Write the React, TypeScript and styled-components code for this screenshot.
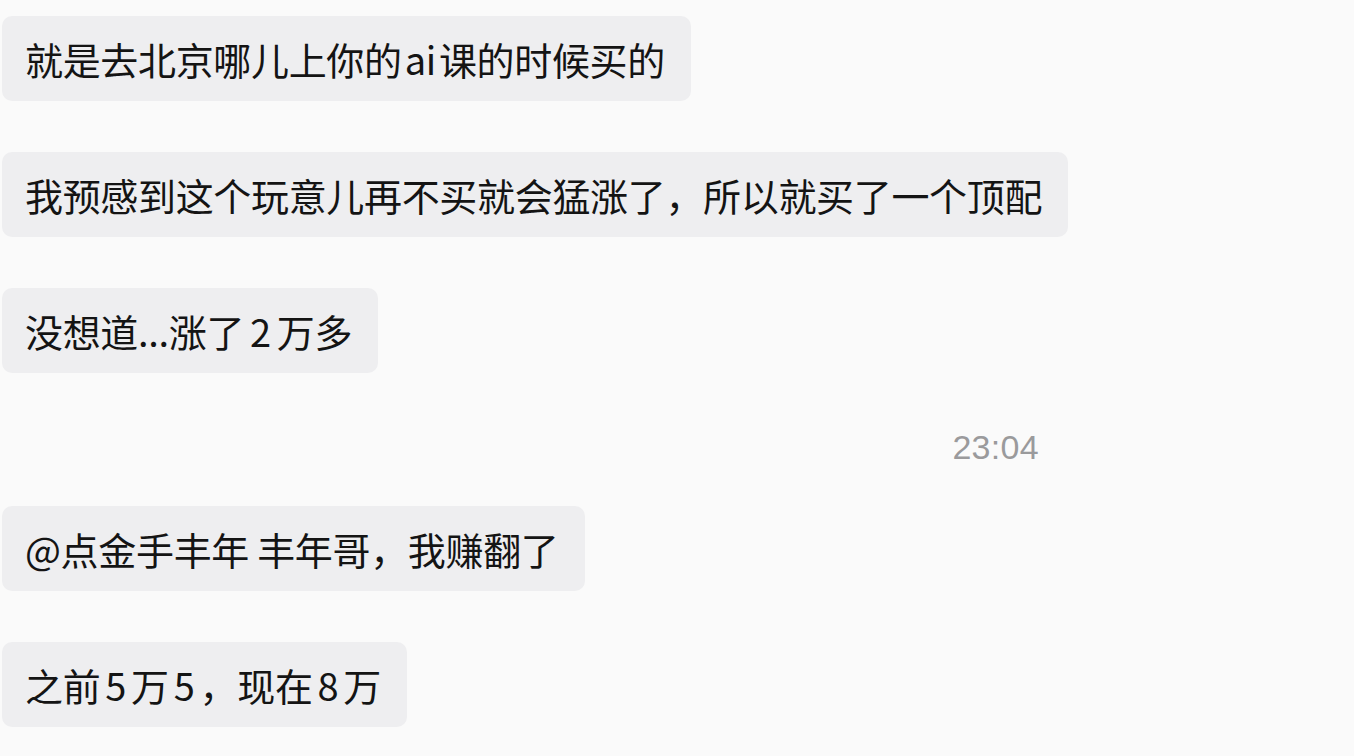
import React from "react";
import styled, { createGlobalStyle } from "styled-components";

const GlobalStyle = createGlobalStyle`
  html, body {
    margin: 0;
    padding: 0;
    background: #fafafa;
  }
  body {
    font-family: "Noto Sans CJK SC", "Noto Sans", sans-serif;
    -webkit-font-smoothing: antialiased;
  }
`;

const Page = styled.div`
  width: 1354px;
  height: 756px;
  background: #fafafa;
  overflow: hidden;
  padding: 16px 0 0 2px;
  box-sizing: border-box;
  display: flex;
  flex-direction: column;
  align-items: flex-start;
`;

const Bubble = styled.div<{ $gapAfter?: number }>`
  background: #eeeef0;
  border-radius: 10px;
  padding: 19px 26px 19px 23px;
  font-size: 38px;
  line-height: 47px;
  letter-spacing: -0.33px;
  color: #141414;
  white-space: nowrap;
  margin-bottom: ${(p) => (p.$gapAfter ?? 51)}px;
`;

const Latin = styled.span<{ $space?: number }>`
  margin: 0 ${(p) => p.$space ?? 3}px;
`;

const TimeRow = styled.div`
  align-self: stretch;
  display: flex;
  justify-content: flex-end;
  padding-right: 315px;
  margin-top: 8px;
  margin-bottom: 44px;
  height: 30px;
  align-items: center;
`;

const Time = styled.span`
  font-family: "Liberation Sans", Arial, sans-serif;
  font-size: 34px;
  line-height: 30px;
  color: #9a9a9c;
  letter-spacing: 0.3px;
`;

export default function App() {
  return (
    <>
      <GlobalStyle />
      <Page>
        <Bubble>
          就是去北京哪儿上你的<Latin>ai</Latin>课的时候买的
        </Bubble>
        <Bubble>我预感到这个玩意儿再不买就会猛涨了，所以就买了一个顶配</Bubble>
        <Bubble>
          没想道...涨了<Latin $space={6}>2</Latin>万多
        </Bubble>
        <TimeRow>
          <Time>23:04</Time>
        </TimeRow>
        <Bubble>@点金手丰年 丰年哥，我赚翻了</Bubble>
        <Bubble>
          之前<Latin $space={5}>5</Latin>万<Latin $space={5}>5</Latin>，现在
          <Latin $space={5}>8</Latin>万
        </Bubble>
      </Page>
    </>
  );
}
